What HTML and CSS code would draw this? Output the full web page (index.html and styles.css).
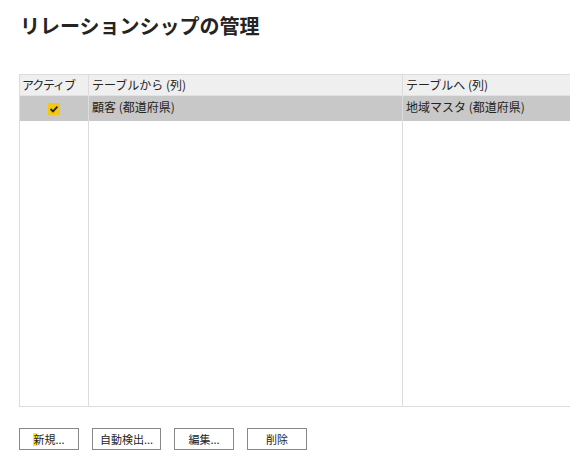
FILE: index.html
```html
<!DOCTYPE html>
<html lang="ja">
<head>
<meta charset="utf-8">
<link rel="stylesheet" href="styles.css">
</head>
<body>
<div class="page">
  <h1 class="title">リレーションシップの管理</h1>
  <div class="grid">
    <div class="row head">
      <div class="cell c1 narrow">アクティブ</div>
      <div class="cell c2">テーブルから (列)</div>
      <div class="cell c3">テーブルへ (列)</div>
    </div>
    <div class="row sel">
      <div class="cell c1 center"><span class="check"><svg width="12" height="12" viewBox="0 0 12 12"><path d="M2.6 6 L5 8.4 L9.4 3.6" fill="none" stroke="#252423" stroke-width="1.8"/></svg></span></div>
      <div class="cell c2">顧客 (都道府県)</div>
      <div class="cell c3">地域マスタ (都道府県)</div>
    </div>
    <div class="row fill">
      <div class="cell c1"></div>
      <div class="cell c2"></div>
      <div class="cell c3"></div>
    </div>
  </div>
  <div class="buttons">
    <button class="btn b1"><span class="hl">新</span>規...</button>
    <button class="btn b2">自動検出...</button>
    <button class="btn b3">編集...</button>
    <button class="btn b4">削除</button>
  </div>
</div>
</body>
</html>
```
FILE: styles.css
```css
html, body { margin: 0; padding: 0; background: #fff; }
body { font-family: "Noto Sans CJK JP", "Noto Sans", sans-serif; color: #252423; overflow: hidden; }
.page { padding: 0 0 0 19px; width: 551px; overflow: hidden; }
.title { margin: 0; padding: 13px 0 0 1px; height: 74px; box-sizing: border-box; font-size: 20px; font-weight: bold; line-height: 26px; color: #252423; }
.grid { border: 1px solid #dcdcdc; border-right: 0; width: 580px; display: flex; flex-direction: column; }
.row { display: flex; }
.cell { box-sizing: border-box; font-size: 12px; line-height: 20px; padding: 0 3px; }
.c1 { width: 69px; border-right: 1px solid #dcdcdc; }
.c2 { width: 314px; border-right: 1px solid #dcdcdc; }
.c3 { flex: 1; }
.narrow { letter-spacing: -1.2px; padding-left: 2px; }
.head { background: #efefef; height: 20px; border-bottom: 1px solid #e2e2e2; }
.head .cell { line-height: 20px; }
.sel { background: #c8c8c8; height: 25px; }
.sel .cell { line-height: 22px; }
.center { display: flex; justify-content: center; align-items: center; padding-top: 1px; }
.check { width: 12px; height: 12px; background: #f2c811; display: block; }
.check svg { display: block; }
.fill { height: 285px; }
.buttons { display: flex; margin-top: 21px; }
.btn { height: 22px; box-sizing: border-box; border: 1px solid #8a8886; background: #fff; font-family: "Noto Sans CJK JP", sans-serif; font-size: 11px; color: #252423; padding: 0; line-height: 18px; margin-right: 13px; display: flex; align-items: center; justify-content: center; }
.b1 { width: 60px; }
.b2 { width: 69px; }
.b3 { width: 60px; }
.b4 { width: 60px; }
.hl { display: block; height: 13px; line-height: 13px; box-shadow: inset 4px 0 0 #ffee00; }
```
